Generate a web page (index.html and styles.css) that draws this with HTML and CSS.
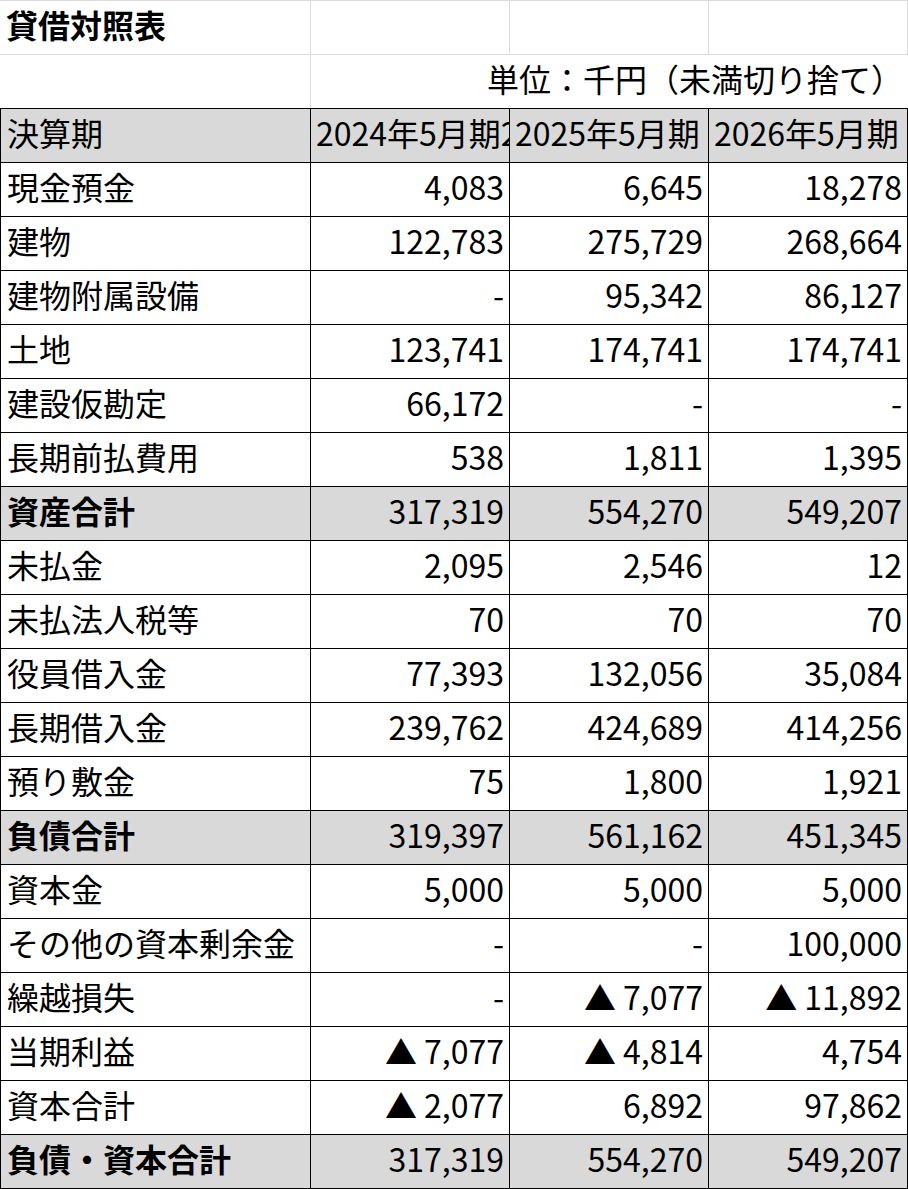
FILE: index.html
```html
<!DOCTYPE html>
<html lang="ja">
<head>
<meta charset="utf-8">
<title>貸借対照表</title>
<link rel="stylesheet" href="styles.css">
</head>
<body>
<div class="sheet">
  <div class="row title">
    <div class="c label bold">貸借対照表</div>
    <div class="c"></div>
    <div class="c"></div>
    <div class="c"></div>
  </div>
  <div class="row unit">
    <div class="c"></div>
    <div class="c num span3">単位：千円（未満切り捨て）</div>
  </div>
  <div class="row shade">
    <div class="c label">決算期</div>
    <div class="c">2024年5月期2</div>
    <div class="c">2025年5月期</div>
    <div class="c">2026年5月期</div>
  </div>
  <div class="row"><div class="c label">現金預金</div><div class="c num">4,083</div><div class="c num">6,645</div><div class="c num">18,278</div></div>
  <div class="row"><div class="c label">建物</div><div class="c num">122,783</div><div class="c num">275,729</div><div class="c num">268,664</div></div>
  <div class="row"><div class="c label">建物附属設備</div><div class="c num">-</div><div class="c num">95,342</div><div class="c num">86,127</div></div>
  <div class="row"><div class="c label">土地</div><div class="c num">123,741</div><div class="c num">174,741</div><div class="c num">174,741</div></div>
  <div class="row"><div class="c label">建設仮勘定</div><div class="c num">66,172</div><div class="c num">-</div><div class="c num">-</div></div>
  <div class="row"><div class="c label">長期前払費用</div><div class="c num">538</div><div class="c num">1,811</div><div class="c num">1,395</div></div>
  <div class="row shade"><div class="c label bold">資産合計</div><div class="c num">317,319</div><div class="c num">554,270</div><div class="c num">549,207</div></div>
  <div class="row"><div class="c label">未払金</div><div class="c num">2,095</div><div class="c num">2,546</div><div class="c num">12</div></div>
  <div class="row"><div class="c label">未払法人税等</div><div class="c num">70</div><div class="c num">70</div><div class="c num">70</div></div>
  <div class="row"><div class="c label">役員借入金</div><div class="c num">77,393</div><div class="c num">132,056</div><div class="c num">35,084</div></div>
  <div class="row"><div class="c label">長期借入金</div><div class="c num">239,762</div><div class="c num">424,689</div><div class="c num">414,256</div></div>
  <div class="row"><div class="c label">預り敷金</div><div class="c num">75</div><div class="c num">1,800</div><div class="c num">1,921</div></div>
  <div class="row shade"><div class="c label bold">負債合計</div><div class="c num">319,397</div><div class="c num">561,162</div><div class="c num">451,345</div></div>
  <div class="row"><div class="c label">資本金</div><div class="c num">5,000</div><div class="c num">5,000</div><div class="c num">5,000</div></div>
  <div class="row"><div class="c label">その他の資本剰余金</div><div class="c num">-</div><div class="c num">-</div><div class="c num">100,000</div></div>
  <div class="row"><div class="c label">繰越損失</div><div class="c num">-</div><div class="c num">▲ 7,077</div><div class="c num">▲ 11,892</div></div>
  <div class="row"><div class="c label">当期利益</div><div class="c num">▲ 7,077</div><div class="c num">▲ 4,814</div><div class="c num">4,754</div></div>
  <div class="row"><div class="c label">資本合計</div><div class="c num">▲ 2,077</div><div class="c num">6,892</div><div class="c num">97,862</div></div>
  <div class="row shade last"><div class="c label bold">負債・資本合計</div><div class="c num">317,319</div><div class="c num">554,270</div><div class="c num">549,207</div></div>
</div>
</body>
</html>
```
FILE: styles.css
```css
html, body {
  margin: 0;
  padding: 0;
  background: #ffffff;
}

.sheet {
  width: 908px;
  font-family: "Noto Sans CJK JP", "Noto Sans", sans-serif;
  font-size: 32px;
  color: #000000;
}

.row {
  display: grid;
  grid-template-columns: 310px 199px 199px 200px;
  height: 54px;
}

.c {
  box-sizing: border-box;
  border-top: 1px solid #000000;
  border-left: 1px solid #000000;
  display: flex;
  align-items: center;
  padding: 0 5px 7px 5px;
  white-space: nowrap;
  overflow: hidden;
  line-height: 1;
}

.c:last-child {
  border-right: 1px solid #000000;
}

.label {
  padding-left: 6px;
}

.num {
  justify-content: flex-end;
  padding-right: 5px;
}

.bold {
  font-weight: 700;
}

.shade .c {
  background: #d9d9d9;
}

.last {
  height: 55px;
}

.last .c {
  border-bottom: 1px solid #000000;
  padding-bottom: 8px;
}

/* spreadsheet gridlines in the untabulated header area */
.title .c,
.unit .c {
  border-top-color: #dcdcdc;
  border-left-color: #dcdcdc;
}

.title .c:first-child,
.unit .c:first-child {
  border-left: none;
}

.title .c:last-child {
  border-right-color: #dcdcdc;
}

.unit .c:last-child {
  border-right: none;
}

.span3 {
  grid-column: 2 / 5;
  padding-right: 5px;
}
```
